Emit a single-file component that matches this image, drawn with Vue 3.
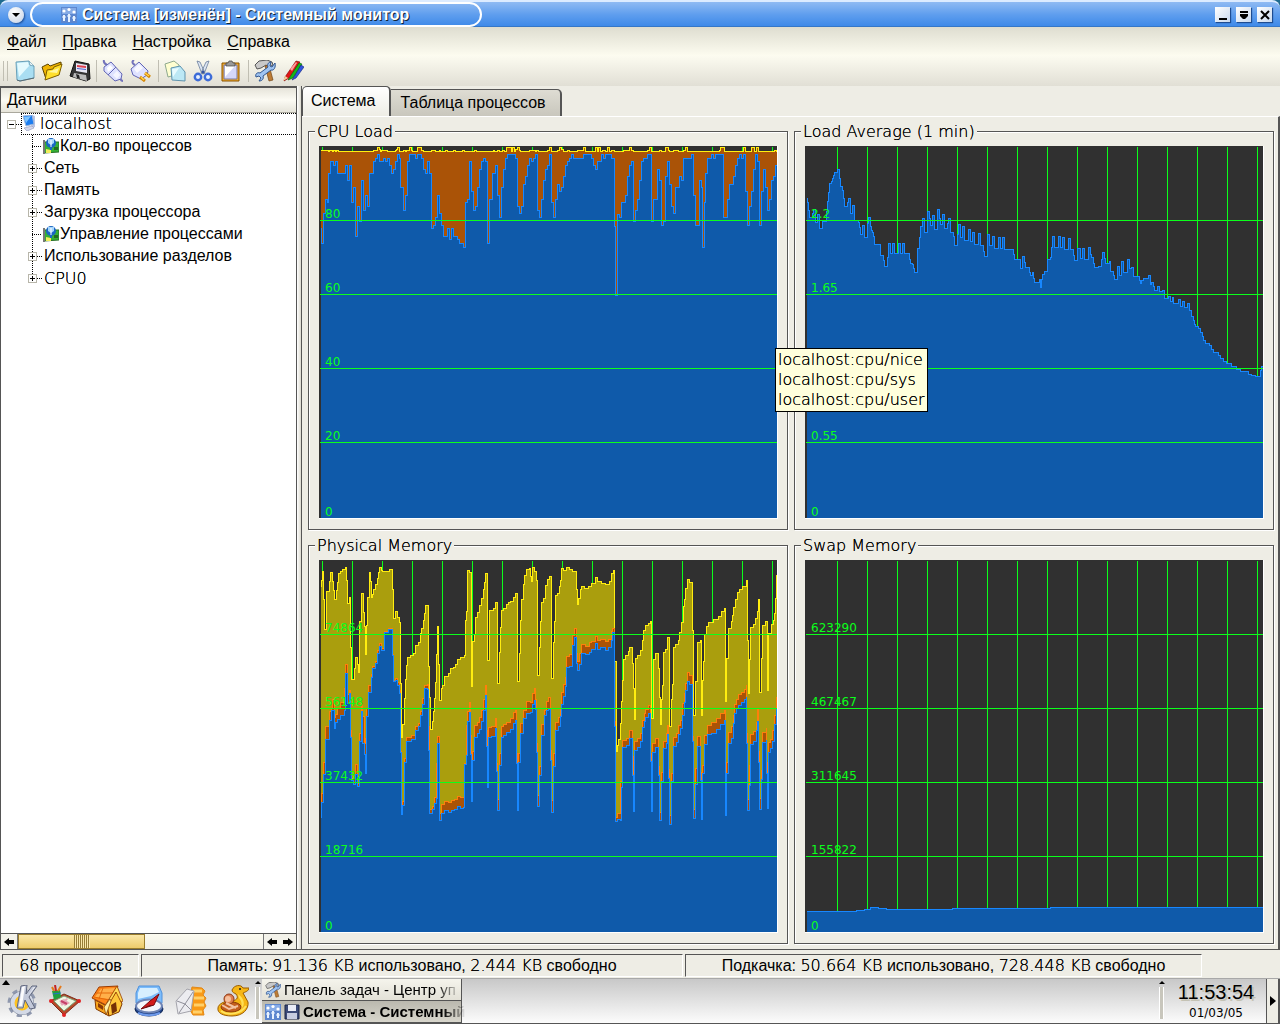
<script setup>
import { ref } from "vue";

const activeTab = ref("Система");
const tabs = ["Система", "Таблица процессов"];

const menus = ["Файл", "Правка", "Настройка", "Справка"];

// icon artwork, 22x22
const art = {
	fresh: `<path d="M3 2l13-1 1 4 4 1v12l-14 3-3-1z" fill="#a9def2" stroke="#6aa0b8"/><path d="M4 3l11-1 1 4-10 11z" fill="#e4fafe"/><path d="M16 1l1 4 4 1z" fill="#fff" stroke="#6aa0b8" stroke-width=".7"/><path d="M4 20l3 1 14-3" fill="none" stroke="#5a6a72"/>`,
	open: `<path d="M1 7l6-3 2 2 11-4v4L5 19z" fill="#f0b400" stroke="#5b4300"/><path d="M6 10l6-1 1-2 8-3-3 11-14 5z" fill="#ffdf2c" stroke="#7c5c00"/><path d="M7 12l11-4-2 5z" fill="#fff6a0"/>`,
	save: `<path d="M6 1l14 3 1 15-4 2-16-5z" fill="#333" stroke="#111"/><path d="M7 3l11 2v8L7 11z" fill="#e8e8f4"/><path d="M8 5l9 1v2l-9-1z" fill="#e04050"/><path d="M8 8l9 1v1l-9-1z" fill="#4a60d0"/><path d="M5 13l12 2 1 6-14-4z" fill="#bbb"/><path d="M7 14l3 1 1 4-3-1z" fill="#222"/>`,
	connect: `<path d="M2 0c-1 3 1 4 3 5M17 18c2 0 1 3 4 3" fill="none" stroke="#7474bb" stroke-width="2"/><path d="M2 7l7-5 11 12-1 5-6 2L2 11z" fill="#dfe2ff" stroke="#6266b5"/><path d="M6 15l8-8" stroke="#6266b5"/><path d="M5 8l3-3 3 3-5 4z" fill="#fff"/><path d="M11 15l4-4 3 4-3 4z" fill="#f5f5ff"/>`,
	disconnect: `<path d="M4 0c-3 2-1 4 1 5" fill="none" stroke="#7474bb" stroke-width="2"/><path d="M1 9l8-7 9 9-1 4-6 4-8-4z" fill="#dfe2ff" stroke="#6266b5"/><path d="M4 9l5-5 4 4-6 5z" fill="#f8f8ff"/><path d="M15 13l5 4M10 17l5 4" stroke="#d58400" stroke-width="3"/><path d="M15 13l4 3M11 17l3 3" stroke="#ffd24a" stroke-width="1.500"/>`,
	copy: `<path d="M1 4l9-3 5 4v9L4 17z" fill="#fffed0" stroke="#8ea98e"/><path d="M7 8l9-2 5 6v9l-13-1z" fill="#bce8f5" stroke="#5f93ad"/><path d="M8 9l7-1-6 9z" fill="#e8fbff"/>`,
	cut: `<path d="M5 1l3 1 5 11-3 1zM17 1l-3 1-5 11 3 1z" fill="#dce5f2" stroke="#697d9c" stroke-width=".8"/><circle cx="6" cy="17" r="3.2" fill="#e7f0ff" stroke="#3d6cd8" stroke-width="2.4"/><circle cx="16" cy="17" r="3.2" fill="#e7f0ff" stroke="#3d6cd8" stroke-width="2.4"/><circle cx="11" cy="12" r="1.4" fill="#3353a3"/>`,
	paste: `<path d="M2 3h17v18H2z" fill="#f0ac2d" stroke="#8a5200"/><path d="M4 5h13v14H4z" fill="#d5d7f8" stroke="#7777a0"/><path d="M5 6h10L5 17z" fill="#fff"/><path d="M6 3h2l1-2h3l1 2h2v3H6z" fill="#999" stroke="#444" stroke-width=".7"/>`,
	tools: `<path d="M1 5l4-4 8-1 5 2 1 3-4 2-3-2-5 3-4 1z" fill="#c9c9c9" stroke="#555"/><path d="M11 6l4-1 4 15-4 1z" fill="#bd7c35" stroke="#744515" stroke-width=".7"/><path d="M21 3l-3 4-2-1 1-4c-3 0-4 3-3 5l-8 6c-3-1-5 1-4 4l3-1 2 2-2 3c3 0 5-2 4-5l8-6c3 1 5-3 4-7z" fill="#9fc4f2" stroke="#31568f"/>`,
	pens: `<path d="M3 17L14 1l4 1L7 18l-5 3z" fill="#e01515" stroke="#700" stroke-width=".6"/><path d="M8 17l9-14 3 1-9 14-5 2z" fill="#18b718" stroke="#075b07" stroke-width=".6"/><path d="M12 17l7-12 3 2-8 11-4 2z" fill="#3055e0" stroke="#112079" stroke-width=".6"/><path d="M1 21l2-5 3 2z" fill="#f1cfa0"/><path d="M8 9l6-7 1 1-5 8z" fill="#ff9c9c"/>`,
	monitor: `<path d="M0 0h16v16H0z" fill="#5d87cf"/><path d="M1 1h14v6H1z" fill="#86abe6"/><path d="M3 8v6M8 7v8M13 9v5" stroke="#e8f2ff" stroke-width="2"/><path d="M1 10h4M6 9h4M11 11h4" stroke="#e8f2ff"/><circle cx="3" cy="4" r="1.600" fill="#fff"/><circle cx="8" cy="2.500" r="1.600" fill="#fff"/><circle cx="13" cy="5" r="1.600" fill="#fff"/>`,
	host: `<path d="M10 0l3 1v11l-4 1z" fill="#b9c4e2"/><path d="M1 1l9-1 2 9-8 2z" fill="#1c7df0" stroke="#9fb7dd"/><path d="M2 2l7-1-5 7z" fill="#7cc4ff"/><path d="M2 13l8-2 2 2-7 3z" fill="#d4d8ec" stroke="#8f97bb" stroke-width=".6"/>`,
	sensor: `<path d="M1 4h15v10L1 15z" fill="#35b035" stroke="#287028"/><path d="M3 11l5 1v3H3z" fill="#f1ec5b"/><path d="M11 9h4v3h-4z" fill="#216b21"/><path d="M0 2h2v14H0z" fill="#777"/><circle cx="8" cy="5" r="5" fill="#1a66c4"/><path d="M7 8h2v4H7z" fill="#1a66c4"/><path d="M5 1h6v4L8 7 5 5z" fill="#a5d6fb"/><path d="M8 2v7" stroke="#fff"/>`,
};

const toolbar = [
	[
		{ name: "Новый", art: art.fresh },
		{ name: "Открыть", art: art.open },
		{ name: "Сохранить", art: art.save },
	],
	[
		{ name: "Подключить", art: art.connect },
		{ name: "Отключить", art: art.disconnect },
	],
	[
		{ name: "Копировать", art: art.copy },
		{ name: "Вырезать", art: art.cut },
		{ name: "Вставить", art: art.paste },
	],
	[
		{ name: "Параметры", art: art.tools },
		{ name: "Стиль", art: art.pens },
	],
];

const sensors = [
	{ label: "Кол-во процессов", leaf: true },
	{ label: "Сеть" },
	{ label: "Память" },
	{ label: "Загрузка процессора" },
	{ label: "Управление процессами", leaf: true },
	{ label: "Использование разделов" },
	{ label: "CPU0", latin: true },
];

// launcher icons, 32x32
const launchers = [
	{
		name: "Меню K",
		art: `<circle cx="15" cy="18" r="12.500" fill="none" stroke="#8e97ad" stroke-width="4" stroke-dasharray="5 4.800"/><circle cx="15" cy="18" r="9.500" fill="none" stroke="#737c92" stroke-width="5"/><circle cx="15" cy="18" r="9.500" fill="#ffc31f" stroke="#d3d9e6" stroke-width="4"/><circle cx="14" cy="20" r="4" fill="#ffe477"/><path d="M14 1l6-1-1 9 6-8 5 0-8 11 6 11-5 1-5-9-2 8-6 0z" fill="#c3c9da" stroke="#5f667d"/><path d="M15 2l3-1-3 20-3 0zM21 11l6-9 1 0-7 9z" fill="#fbfbfd"/>`,
	},
	{
		name: "Рабочий стол",
		art: `<path d="M1 16L15 9l16 7-16 14z" fill="#b54a2a" stroke="#7d2d18"/><path d="M5 16l10-5 12 5-12 10z" fill="#eef7e2" stroke="#7aa079"/><path d="M10 16l5-2 6 4-5 3zM11 18l7-5 1 1-6 7z" fill="#e6a9b9"/><path d="M12 16l6 3" stroke="#c54368" stroke-width="2"/><path d="M3 6l8-1 1 7-7 3z" fill="#1fa13e"/><path d="M5 6L3 2M9 6l3-5" stroke="#e57b1c" stroke-width="2"/><path d="M7 6l-1-6" stroke="#c32222" stroke-width="2"/><path d="M4 9l8-1" stroke="#2a6fd0"/><circle cx="2" cy="16" r="2" fill="#e02222"/><circle cx="30" cy="16" r="2" fill="#e02222"/><circle cx="15" cy="30" r="2" fill="#e02222"/>`,
	},
	{
		name: "Домой",
		art: `<path d="M4 15l12 6 2 10-13-7z" fill="#f9a41a" stroke="#813800"/><path d="M16 20L26 6l5 13-3 8-10 4z" fill="#ffc739" stroke="#813800"/><path d="M1 13L8 2l19-1-10 20z" fill="#ff8418" stroke="#9b3b00"/><path d="M4 12l6-8 14-1-6 11z" fill="#ffb04a"/><path d="M5 8h17M3 12l15 3M12 3L8 14" stroke="#e36b0c" fill="none"/><path d="M26 1l6 15-2 1-5-10-8 14-2-2z" fill="#ffdb55" stroke="#9b3b00" stroke-width=".8"/><path d="M20 20l5-3 1 9-5 3z" fill="#743006"/><path d="M13 22l6-8 1 2-5 14z" fill="#fff0a8" stroke="#813800" stroke-width=".7"/><path d="M7 18l5 3v4l-5-3z" fill="#8b3906"/>`,
	},
	{
		name: "Konqueror",
		art: `<path d="M6 1h20l3 7v10l-5 4H8l-5-4V8z" fill="#7cbcfb" stroke="#4e91dc"/><path d="M7 3h17l2 4-8 4-13 3V8z" fill="#d7efff"/><ellipse cx="16" cy="24" rx="14" ry="7" fill="#1b3f86" stroke="#102552"/><ellipse cx="16" cy="21" rx="13" ry="6.500" fill="#f3f6fb" stroke="#6e84b5" stroke-width="2"/><path d="M8 24l9-8 9-7-5 11z" fill="#d21a1a" stroke="#78090d"/><path d="M8 24l9-4 4 0z" fill="#6a1116"/><path d="M5 28c6 3 16 3 22 0" fill="none" stroke="#6e9aea" stroke-width="2"/>`,
	},
	{
		name: "Kontact",
		art: `<path d="M17 2l10 1 3 3-2 4 3 3-2 4 2 4-3 4 1 5H18l-5-8z" fill="#f99a17" stroke="#e08818"/><path d="M18 6h9M19 13h10M19 20h10M18 27h9" stroke="#ffd06a" stroke-width="3"/><path d="M1 16L12 4l7 2-3 20-13 3z" fill="#ececf0" stroke="#a4a4ac"/><path d="M2 16l8 3 8-12M10 19L4 28M10 19l6 6" fill="none" stroke="#8f8f99"/>`,
	},
	{
		name: "Kopete",
		art: `<path d="M15 5c2-5 9-6 11-2l6 0c0 3-4 4-6 5l5 9c1 7-5 14-16 14C6 31 0 28 1 23c0-4 7-7 11-7 8 0 10-3 7-7-1-1-4-1-4-4z" fill="#f6b615" stroke="#9a5b00"/><path d="M21 9c6 4 8 11 3 15 1-4 1-8-2-11z" fill="#ffde55"/><ellipse cx="14" cy="22" rx="10" ry="5" fill="#c35d1f" stroke="#8d3a05"/><circle cx="12" cy="14" r="5" fill="#dd7f4f" stroke="#8f3815"/><circle cx="11" cy="14" r="3" fill="#f7c09d"/><path d="M5 20l7 4 9-3M9 18l10 5" fill="none" stroke="#f3c4a5" stroke-width="2"/><circle cx="23" cy="4" r="1" fill="#222"/><path d="M4 26c7 5 20 3 25-5" fill="none" stroke="#ffe25e" stroke-width="2"/>`,
	},
];

// Sample traces: "x,y" or "x,y1,y2" groups, three units to one chart pixel.
const cpuTotal =
	"60,199 84,202 87,199 96,202 99,199 105,202 108,199 114,202 219,199 231,191 237,196 241,202 244,199 262,202 285,199 288,196 291,191 297,202 309,199 315,202 318,199 327,191 333,199 336,202 351,191 363,199 369,202 393,199 405,202 417,199 420,202 435,199 441,202 459,199 465,202 486,199 492,202 522,199 528,202 579,199 582,202 591,199 597,202 606,199 612,202 618,191 633,202 636,191 642,202 645,196 651,191 657,199 660,202 687,199 705,202 708,199 714,202 741,199 747,191 753,202 771,199 777,191 783,196 789,202 801,199 807,202 831,199 849,191 855,202 885,191 891,202 894,191 900,202 906,199 915,202 921,191 927,202 933,199 942,202 969,199 987,191 993,199 999,202 1041,199 1047,191 1053,202 1077,199 1083,202 1095,191 1104,199 1107,202 1119,199 1134,202 1149,199 1155,191 1161,202 1257,199 1260,191 1272,202 1329,191 1335,202 1353,191 1362,202 1368,191 1374,202 1422,199 1428,202";
const cpuUser =
	"60,432 64,478 69,387 75,347 81,355 86,268 92,233 99,244 105,233 111,268 135,244 141,290 147,244 153,355 159,310 165,458 171,367 177,411 183,290 189,380 195,335 201,367 207,268 219,233 225,222 231,211 237,233 249,222 255,233 261,222 267,244 273,268 279,256 285,233 291,211 297,222 300,310 309,380 315,335 321,233 327,211 345,222 351,211 363,222 369,256 375,268 381,233 387,268 393,432 399,424 405,400 411,335 417,387 423,424 429,458 441,432 447,467 453,432 459,458 471,467 477,478 489,490 495,355 501,347 507,233 513,322 519,380 525,367 531,310 537,256 543,233 549,222 555,233 561,478 567,347 576,268 585,244 591,335 597,400 603,310 609,256 615,222 621,211 645,222 651,367 657,387 663,367 669,302 675,277 681,244 687,222 693,233 699,222 705,211 711,380 717,400 723,347 729,290 735,256 741,244 747,211 753,355 759,400 765,347 771,302 777,322 783,310 789,277 795,244 801,233 807,222 813,211 819,222 849,211 873,222 879,244 885,256 891,233 903,211 909,222 915,211 933,222 942,428 945,635 951,390 957,400 963,355 975,335 981,277 987,244 993,233 999,411 1005,380 1011,347 1017,290 1023,233 1029,222 1041,211 1053,411 1059,347 1071,256 1077,290 1083,424 1089,411 1095,277 1101,233 1107,302 1113,367 1119,387 1125,310 1137,277 1143,290 1149,222 1173,211 1179,335 1185,424 1197,290 1203,310 1207,490 1212,355 1217,268 1223,222 1235,211 1241,222 1247,211 1271,400 1283,347 1289,302 1301,277 1307,244 1313,222 1319,211 1325,222 1331,211 1337,322 1343,424 1349,367 1355,322 1361,256 1367,211 1373,233 1379,424 1385,322 1391,256 1397,310 1403,380 1409,347 1415,290 1421,277 1427,244";
const loadAverage =
	"48,235 51,247 54,270 58,292 66,280 69,268 75,306 81,283 87,325 97,304 108,274 111,244 115,217 118,190 124,183 127,175 130,166 133,157 142,148 148,175 151,199 156,211 160,235 163,259 172,247 175,235 180,280 186,256 192,300 205,306 208,322 211,343 217,316 223,352 232,310 234,292 240,319 243,331 247,337 250,349 253,373 270,390 272,406 280,421 283,439 292,411 295,370 301,400 307,370 313,400 325,370 331,400 337,370 343,400 358,418 361,430 367,433 370,444 373,457 382,385 388,352 391,319 397,295 402,319 403,337 412,274 419,295 421,316 427,286 433,328 443,268 449,295 452,312 457,283 463,325 473,310 475,295 480,319 481,337 490,349 493,376 502,343 505,313 510,337 512,351 517,319 523,361 535,328 541,363 547,337 553,373 565,340 571,376 580,394 583,409 592,343 598,376 607,349 613,385 625,352 631,385 637,352 643,388 670,403 673,418 690,445 696,409 702,427 705,441 718,457 722,466 727,457 731,475 734,487 747,479 750,502 755,478 757,463 763,454 772,418 781,412 784,382 787,349 793,382 805,349 811,382 817,352 823,388 835,355 841,388 850,405 853,421 862,385 870,415 877,385 883,418 894,382 900,403 903,412 911,430 914,442 925,439 934,418 937,397 943,415 946,430 958,424 962,454 970,466 973,478 982,439 989,466 995,424 1001,457 1013,418 1019,445 1025,442 1031,468 1048,480 1051,490 1055,481 1060,475 1075,466 1081,493 1085,487 1091,500 1093,511 1103,499 1109,514 1117,511 1122,535 1134,529 1140,544 1147,532 1151,550 1164,538 1170,559 1177,544 1184,562 1192,550 1198,571 1203,588 1209,600 1214,612 1217,619 1226,625 1231,636 1236,650 1241,660 1247,670 1258,676 1264,688 1270,698 1285,706 1292,716 1300,725 1310,731 1324,740 1338,748 1352,755 1376,762 1385,767 1397,769 1410,752 1413,740";
const memoryTotal =
	"60,169 65,150 67,124 70,208 73,298 78,184 89,154 91,127 97,154 101,181 104,208 108,181 111,157 115,130 121,124 127,119 136,112 140,151 142,220 148,202 152,352 153,448 163,415 166,382 171,403 174,427 177,370 179,275 184,190 189,246 192,289 195,343 197,373 200,286 202,202 207,127 212,154 215,202 218,193 220,178 226,163 231,145 235,127 238,113 243,122 248,124 268,118 278,178 280,265 286,244 292,262 297,277 300,289 302,460 304,622 308,583 313,505 316,448 319,406 322,382 332,376 340,370 346,346 355,338 362,310 364,295 370,271 374,250 376,226 386,408 387,502 390,598 396,574 399,544 403,505 406,457 409,373 411,289 416,404 418,511 424,475 427,466 434,438 445,430 452,415 460,412 466,403 472,388 481,381 492,376 495,272 498,244 501,121 508,127 513,300 514,469 518,335 522,313 525,262 531,247 537,226 543,205 550,178 553,157 556,130 561,250 563,391 567,241 580,235 586,217 591,320 593,460 597,368 600,292 603,240 610,235 618,223 624,217 631,214 639,202 645,190 651,328 652,454 657,370 661,270 664,209 669,163 673,136 680,119 688,115 690,139 693,154 698,112 704,124 709,152 711,355 713,436 718,352 721,274 723,217 730,205 736,166 741,148 748,139 753,250 754,445 759,337 763,274 765,196 771,190 777,169 782,151 784,115 790,121 799,112 807,118 817,124 829,178 831,222 836,205 841,178 844,170 853,175 865,170 874,160 886,142 892,154 904,160 916,163 928,154 933,130 940,121 944,394 948,664 951,646 955,628 960,580 963,514 966,451 969,388 976,376 985,364 988,352 997,400 999,475 1002,569 1005,385 1011,376 1020,361 1026,331 1029,301 1035,286 1044,280 1050,274 1053,430 1055,565 1059,388 1065,370 1075,415 1077,502 1080,583 1083,508 1086,466 1089,367 1096,358 1102,322 1107,469 1109,589 1113,508 1116,463 1119,352 1125,343 1134,331 1137,307 1143,277 1149,229 1152,208 1156,175 1161,149 1167,157 1178,300 1180,556 1185,454 1191,337 1200,331 1203,470 1204,556 1207,450 1209,394 1212,312 1220,289 1225,277 1240,268 1254,260 1263,244 1272,235 1275,300 1276,514 1279,385 1284,295 1294,274 1297,256 1300,232 1306,208 1311,187 1317,178 1326,169 1338,152 1341,330 1344,490 1347,388 1350,292 1360,283 1366,265 1372,244 1375,208 1377,370 1379,487 1383,385 1386,286 1395,274 1401,380 1403,481 1406,310 1413,283 1419,271 1423,250 1426,205 1429,136";
const memoryParts =
	"60,830,862 65,790,817 69,698,733 77,590,627 88,544,571 93,535,541 98,508,541 102,562,595 107,553,577 113,535,568 120,517,556 132,475,541 136,403,430 141,494,520 148,481,490 152,600,622 154,745,750 160,745,763 166,704,733 171,760,769 177,610,634 183,520,545 188,560,640 192,640,673 196,626,730 200,535,559 206,466,487 213,433,442 218,409,415 226,393,400 232,361,370 237,340,349 243,355,360 254,305,307 266,295,297 276,372,375 280,452,455 286,445,450 291,457,466 297,480,490 301,665,668 304,850,853 308,815,826 314,685,697 320,622,634 335,617,627 345,590,601 355,580,589 361,545,556 367,505,523 374,466,475 383,463,478 385,590,661 387,838,850 397,829,838 403,802,820 409,700,805 411,619,640 417,850,871 423,824,850 434,815,841 445,818,847 454,812,842 463,808,838 472,800,828 480,803,834 490,802,832 494,700,703 498,586,676 501,544,574 507,517,547 511,615,673 514,782,814 517,665,691 524,586,622 531,576,610 537,562,598 543,542,574 549,508,541 555,466,496 560,600,649 562,740,772 566,592,622 573,590,619 585,565,595 590,700,724 592,808,841 598,670,706 603,590,622 610,583,617 620,577,607 630,565,598 640,548,580 646,541,571 650,670,700 652,808,841 656,670,697 661,580,611 670,542,565 678,514,550 690,518,547 697,490,523 702,475,510 706,508,538 710,640,667 712,796,829 717,710,736 723,582,616 733,540,556 738,515,541 745,503,538 751,660,690 754,812,848 759,670,709 765,576,601 775,562,590 780,537,560 783,487,523 790,463,500 795,442,470 799,378,412 808,374,408 817,315,345 823,295,322 829,370,400 832,395,421 838,370,403 843,343,370 855,348,373 867,337,367 875,333,358 885,318,340 892,330,357 900,328,352 915,333,360 926,328,352 933,304,330 937,295,306 942,575,590 946,862,874 953,850,868 960,755,870 963,753,772 968,632,652 978,625,646 988,602,625 997,680,736 1000,820,845 1004,634,661 1011,625,652 1020,611,634 1026,571,592 1032,550,574 1036,538,562 1046,527,550 1051,670,694 1054,820,845 1058,640,667 1066,625,653 1075,710,735 1078,848,871 1083,728,754 1089,633,655 1098,611,640 1102,587,614 1106,718,745 1108,856,883 1115,730,754 1119,622,650 1128,610,637 1136,586,613 1140,571,595 1147,520,556 1152,490,517 1156,460,481 1162,428,454 1169,436,463 1177,620,635 1180,838,865 1185,715,763 1191,620,650 1201,726,752 1204,843,868 1207,706,730 1212,615,643 1222,586,613 1235,577,610 1249,566,597 1260,551,583 1272,541,571 1275,825,856 1278,698,730 1284,606,639 1293,590,625 1299,556,580 1304,523,550 1310,508,535 1315,494,526 1323,487,517 1332,478,508 1338,464,500 1340,610,640 1342,808,841 1347,706,766 1350,613,642 1359,604,634 1368,577,601 1373,538,574 1375,665,697 1378,806,838 1383,720,749 1386,607,637 1398,593,628 1400,698,729 1402,805,835 1404,637,667 1410,628,655 1417,602,635 1423,556,583 1428,502,534";
const swapUsed = "3,1053 153,1050 177,1047 195,1041 219,1044 243,1047 441,1044 735,1041";

const WIDTH = 458;
const HEIGHT = 372;

// turns a trace into a stepped path; column picks the y value of the group
const stepPath = (trace, left = 0, top = 0, column = 1) => {
	const points = trace.split(" ").map(group => {
		const values = group.split(",").map(Number);
		return [Math.floor((values[0] - left) / 3), Math.floor((values[column] - top) / 3)];
	});
	const steps = points.map(([x, y]) => `H${x + 0.5}V${y + 0.5}`).join("");
	return `M1.5 ${points[0][1] + 0.5}${steps}H${WIDTH}`;
};

const series = (name, color, line, fill) => ({ name, line, color, fill });

const blue = ["#1787ff", "#0f5aaa"];

const charts = [
	{
		title: "CPU Load",
		labels: ["80", "60", "40", "20", "0"],
		firstLine: 3,
		series: [
			series("total", "#fff010", stepPath(cpuTotal, 57, 186), "#aa5307"),
			series("user", blue[0], stepPath(cpuUser, 57, 186), blue[1]),
		],
	},
	{
		title: "Load Average (1 min)",
		labels: ["2.2", "1.65", "", "0.55", "0"],
		firstLine: 32,
		series: [series("load", blue[0], stepPath(loadAverage, 45, 78), blue[1])],
	},
	{
		title: "Physical Memory",
		labels: ["74864", "56148", "37432", "18716", "0"],
		firstLine: 3,
		series: [
			series("total", "#ffed10", stepPath(memoryTotal, 57, 90), "#aa9e0d"),
			series("cached", "#ff7f0b", stepPath(memoryParts, 57, 90), "#aa5307"),
			series("used", blue[0], stepPath(memoryParts, 57, 90, 2), blue[1]),
		],
	},
	{
		title: "Swap Memory",
		labels: ["623290", "467467", "311645", "155822", "0"],
		firstLine: 32,
		series: [series("swap", blue[0], stepPath(swapUsed), blue[1])],
	},
];

const verticals = first => {
	const result = [];
	for (let x = first; x < WIDTH; x += 30) result.push(x + 0.5);
	return result;
};
</script>

<template>
	<div class="desktop">
		<header class="titlebar">
			<button class="window-menu" aria-label="Меню окна">
				<svg viewBox="0 0 14 14"><path d="M3 5h8l-4 4z" /></svg>
			</button>
			<div class="caption">
				<svg class="icon-small" viewBox="0 0 16 16" v-html="art.monitor"></svg>
				<h1>Система [изменён] - Системный монитор</h1>
			</div>
			<div class="window-buttons">
				<button aria-label="Свернуть"><svg viewBox="0 0 14 14"><path d="M3 10h8v2H3z" /></svg></button>
				<button aria-label="Развернуть"><svg viewBox="0 0 14 14"><path d="M3 3h8v2H3zM3 6h8v2L8 11H6L3 8z" /></svg></button>
				<button aria-label="Закрыть"><svg viewBox="0 0 14 14"><path d="M3 3l8 8M11 3l-8 8" stroke="#000" stroke-width="2" /></svg></button>
			</div>
		</header>

		<nav class="menubar">
			<button v-for="menu in menus" :key="menu"><u>{{ menu[0] }}</u>{{ menu.slice(1) }}</button>
		</nav>

		<div class="toolbar">
			<span class="handle"></span>
			<div v-for="(group, i) in toolbar" :key="i" class="tool-group">
				<button v-for="tool in group" :key="tool.name" :aria-label="tool.name">
					<svg viewBox="0 0 22 22" v-html="tool.art"></svg>
				</button>
			</div>
		</div>

		<main class="workspace">
			<aside class="sensors">
				<div class="sensors-header">Датчики</div>
				<ul class="tree">
					<li class="tree-root">
						<button class="expander" aria-label="Свернуть узел">
							<svg viewBox="0 0 9 9"><path d="M1 3.500h5" /></svg>
						</button>
						<span class="stub"></span>
						<span class="root-label latin">
							<svg class="icon-small" viewBox="0 0 16 16" v-html="art.host"></svg>localhost
						</span>
					</li>
					<li v-for="sensor in sensors" :key="sensor.label" class="tree-item" :class="{ leaf: sensor.leaf }">
						<button v-if="!sensor.leaf" class="expander" aria-label="Развернуть узел">
							<svg viewBox="0 0 9 9"><path d="M1 3.500h5M3.500 1v5" /></svg>
						</button>
						<span class="branch"></span>
						<svg v-if="sensor.leaf" class="icon-small" viewBox="0 0 16 16" v-html="art.sensor"></svg>
						<span :class="{ latin: sensor.latin }">{{ sensor.label }}</span>
					</li>
				</ul>
				<div class="scrollbar">
					<button aria-label="Влево"><svg viewBox="0 0 12 12"><path d="M1 6l5-4v2h5v4H6v2z" /></svg></button>
					<div class="track"><div class="thumb"><span class="grip"></span></div></div>
					<button aria-label="Влево"><svg viewBox="0 0 12 12"><path d="M1 6l5-4v2h5v4H6v2z" /></svg></button>
					<button aria-label="Вправо"><svg viewBox="0 0 12 12"><path d="M11 6L6 2v2H1v4h5v2z" /></svg></button>
				</div>
			</aside>

			<div class="splitter"></div>

			<section class="content">
				<div class="tabs" role="tablist">
					<button
						v-for="tab in tabs"
						:key="tab"
						role="tab"
						:aria-selected="activeTab === tab"
						:class="{ active: activeTab === tab }"
						@click="activeTab = tab"
					>
						{{ tab }}
					</button>
				</div>
				<div class="worksheet">
					<fieldset v-for="chart in charts" :key="chart.title" class="chart">
						<legend class="latin">{{ chart.title }}</legend>
						<div class="plot">
							<svg :viewBox="`0 0 ${WIDTH} ${HEIGHT}`" preserveAspectRatio="none" shape-rendering="crispEdges">
								<line
									v-for="x in verticals(chart.firstLine)"
									:key="x"
									:x1="x"
									:x2="x"
									y1="1"
									:y2="HEIGHT"
									class="grid-line"
								/>
								<template v-for="item in chart.series" :key="item.name">
									<path :d="`${item.line}V${HEIGHT}H1.5Z`" :fill="item.fill" />
									<path :d="item.line" :stroke="item.color" fill="none" />
								</template>
								<line v-for="n in 4" :key="n" x1="1" :x2="WIDTH" :y1="n * 74 + 0.5" :y2="n * 74 + 0.5" class="grid-line" />
							</svg>
							<div class="scale">
								<span v-for="label in chart.labels" :key="label">{{ label }}</span>
							</div>
						</div>
					</fieldset>
					<div class="tooltip latin" role="tooltip">
						<div>localhost:cpu/nice</div>
						<div>localhost:cpu/sys</div>
						<div>localhost:cpu/user</div>
					</div>
				</div>
			</section>
		</main>

		<footer class="statusbar">
			<div><span class="latin">68</span> процессов</div>
			<div>Память: <span class="latin">91.136 KB</span> использовано, <span class="latin">2.444 KB</span> свободно</div>
			<div>Подкачка: <span class="latin">50.664 KB</span> использовано, <span class="latin">728.448 KB</span> свободно</div>
		</footer>

		<div class="panel">
			<div class="launchers">
				<span class="mark"></span>
				<button v-for="app in launchers" :key="app.name" :aria-label="app.name">
					<svg viewBox="0 0 32 32" v-html="app.art"></svg>
				</button>
			</div>
			<div class="applet-handle"></div>
			<div class="tasks">
				<button>
					<svg class="icon-small" viewBox="0 0 22 22" v-html="art.tools"></svg>
					<span>Панель задач - Центр уп</span>
				</button>
				<button class="current">
					<svg class="icon-small" viewBox="0 0 16 16" v-html="art.monitor"></svg>
					<svg class="icon-small" viewBox="0 0 16 16">
						<path d="M1 1h14v14H1z" fill="#3b4a78" stroke="#1b2444" />
						<path d="M4 1h8v6H4z" fill="#e9ecf6" />
						<path d="M3 9h10v6H3z" fill="#c6cce0" />
					</svg>
					<span>Система - Системный</span>
				</button>
			</div>
			<div class="panel-space"></div>
			<div class="applet-handle"></div>
			<div class="clock">
				<time class="digits">11:53:54</time>
				<time class="date">01/03/05</time>
			</div>
			<button class="hide-panel" aria-label="Скрыть панель">
				<svg viewBox="0 0 6 10"><path d="M0 0l6 5-6 5z" /></svg>
			</button>
		</div>
	</div>
</template>

<style>
body {
	margin: 0;
	background: #eeede5;
}
</style>

<style scoped>
.desktop {
	display: flex;
	flex-direction: column;
	min-height: 100vh;
	background: linear-gradient(#1f6b8f 10px, #eeede5 10px);
	color: #000;
	font-family: "Liberation Sans", Arial, sans-serif;
	font-size: 16px;
}

.desktop * {
	box-sizing: border-box;
}

button {
	display: flex;
	align-items: center;
	justify-content: center;
	padding: 0;
	border: 0;
	background: none;
	color: inherit;
	font: inherit;
}

svg {
	display: block;
	flex: none;
}

.latin {
	font-family: "DejaVu Sans", sans-serif;
	font-weight: 200;
	text-shadow: 0 0 #000;
}

.icon-small {
	width: 16px;
	height: 16px;
}

.titlebar {
	display: flex;
	align-items: center;
	height: 27px;
	padding: 0 8px;
	border-top: 2px solid #dcebff;
	border-radius: 8px 8px 0 0;
	background: linear-gradient(#8fbaf3, #5f9eee 50%, #3c88e8);
	box-shadow: inset 0 -1px #3577c8;
}

.window-menu {
	width: 16px;
	height: 16px;
	border-radius: 50%;
	background: radial-gradient(circle at 40% 30%, #fff, #c3d0e4);
	box-shadow: 1px 1px 2px #1d4c92;
}

.window-menu svg {
	width: 14px;
	height: 14px;
}

.caption {
	display: flex;
	align-items: center;
	gap: 5px;
	width: 452px;
	height: 25px;
	margin-left: 6px;
	padding-left: 29px;
	border: 2px solid #fff;
	border-radius: 13px;
}

.caption h1 {
	margin: 0;
	color: #fff;
	font-size: 16px;
	line-height: 18px;
	text-shadow: 1px 1px #123;
	white-space: nowrap;
}

.window-buttons {
	display: flex;
	gap: 6px;
	margin-left: auto;
}

.window-buttons button {
	width: 15px;
	height: 15px;
	background: linear-gradient(135deg, #fff, #c9d9ee);
	box-shadow: 1px 1px 1px #1d4c92;
}

.window-buttons svg {
	width: 14px;
	height: 14px;
}

.menubar {
	display: flex;
	gap: 16px;
	height: 29px;
	padding-left: 7px;
	background: linear-gradient(#deddd0, #fdfcf0);
}

.menubar u {
	text-underline-offset: 2px;
}

.toolbar {
	display: flex;
	align-items: center;
	height: 30px;
	padding-left: 3px;
	background: linear-gradient(#fcfbf0, #e1dfd5);
}

.handle {
	width: 5px;
	height: 20px;
	border: solid #c0beb2;
	border-width: 0 1px;
}

.tool-group {
	display: flex;
	gap: 6px;
	padding: 0 5px;
}

.tool-group + .tool-group {
	padding-right: 6px;
	border-left: 1px solid #c0beb2;
}

.tool-group svg {
	width: 22px;
	height: 22px;
}

.workspace {
	display: flex;
	flex: 1;
	padding-bottom: 2px;
}

.sensors {
	display: flex;
	flex-direction: column;
	width: 296px;
	border: solid #555;
	border-width: 2px 0 1px 1px;
	background: #fff;
}

.sensors-header {
	height: 25px;
	padding-left: 6px;
	border-bottom: 1px solid #aaa89d;
	background: linear-gradient(#e6e4da, #fcfbf4 50%, #e6e4da);
	line-height: 24px;
}

.tree {
	flex: 1;
	margin: 0;
	padding: 0;
	list-style: none;
}

.tree-root {
	display: flex;
	align-items: center;
	height: 22px;
	padding-left: 6px;
}

.tree-root .stub {
	width: 5px;
	border-top: 1px dotted #000;
}

.root-label {
	display: flex;
	flex: 1;
	align-items: center;
	gap: 2px;
	height: 22px;
	padding-bottom: 2px;
	border: 1px dotted #000;
	border-right: 0;
}

.expander {
	z-index: 1;
	width: 9px;
	height: 9px;
	border: 1px solid #b8b6aa;
	background: #fff;
}

.expander svg {
	width: 9px;
	height: 9px;
	margin: 0 -2px -2px 0;
	stroke: #000;
	shape-rendering: crispEdges;
}

.tree-item {
	display: flex;
	align-items: center;
	height: 22px;
	margin-left: 31px;
	background: repeating-linear-gradient(#000 0 1px, transparent 1px 2px) 0 0 / 1px 100% no-repeat;
}

.tree-item .expander {
	margin-left: -4px;
}

.tree-item .branch {
	width: 5px;
	margin-right: 2px;
	border-top: 1px dotted #000;
}

.tree-item.leaf .branch {
	width: 9px;
}

.tree-item.leaf .icon-small {
	margin-right: 1px;
}

.tree-item:last-child {
	background-size: 1px 50%;
}

.scrollbar {
	display: flex;
	height: 16px;
	border-top: 1px solid #555;
}

.scrollbar button {
	width: 16px;
	background: #f3f2ea;
}

.scrollbar svg {
	width: 12px;
	height: 12px;
}

.track {
	flex: 1;
	border: solid #777;
	border-width: 0 1px;
	background: linear-gradient(#fcfbf0, #f1efe6);
}

.thumb {
	display: flex;
	justify-content: center;
	width: 52%;
	height: 100%;
	border: 1px solid #9a7d2c;
	background: linear-gradient(#fbe8a9, #edcb6b);
}

.grip {
	width: 16px;
	background: repeating-linear-gradient(90deg, #977d36 0 1px, #fbe8a9 1px 2px);
}

.splitter {
	width: 6px;
	border: solid #555;
	border-width: 0 1px 1px;
	background: linear-gradient(90deg, #fff, #dcdacf);
}

.content {
	display: flex;
	flex: 1;
	flex-direction: column;
}

.tabs {
	display: flex;
	align-items: flex-end;
	height: 30px;
}

.tabs button {
	height: 27px;
	padding: 0 14px 1px 9px;
	border: solid #555;
	border-width: 1px 2px 0 0;
	border-radius: 0 5px 0 0;
	background: linear-gradient(#dedcd3, #c9c7bd);
}

.tabs .active {
	height: 30px;
	padding-left: 8px;
	border-left-width: 1px;
	border-radius: 5px 5px 0 0;
	background: linear-gradient(#fff, #eeede5);
}

.worksheet {
	position: relative;
	display: grid;
	flex: 1;
	grid-template-columns: 1fr 1fr;
	grid-template-rows: 1fr 1fr;
	gap: 6px;
	padding: 5px 4px 5px 6px;
	border: solid #555;
	border-width: 0 2px 1px 0;
	border-top: 1px solid #fff;
}

.chart {
	display: flex;
	min-width: 0;
	margin: 0;
	padding: 6px 9px 10px 10px;
	border: 1px solid #555;
	box-shadow: inset 1px 1px #fff, 1px 1px #fff;
}

.chart legend {
	height: 18px;
	margin-left: -4px;
	padding: 0 2px;
	background: #eeede5;
	line-height: 20px;
}

.plot {
	position: relative;
	flex: 1;
	min-height: 200px;
	border: solid #fff;
	border-width: 0 1px 1px 0;
	background: #303030;
}

.plot svg {
	position: absolute;
	width: 100%;
	height: 100%;
}

.grid-line {
	stroke: #0bff1b;
}

.scale {
	position: absolute;
	inset: 0;
	display: grid;
	grid-template-rows: 74fr 74fr 74fr 74fr 76fr;
	align-items: end;
	padding-left: 6px;
	color: #0bff1b;
	font-family: "DejaVu Sans", sans-serif;
	font-size: 12px;
	line-height: 11px;
}

.tooltip {
	position: absolute;
	top: 231px;
	left: 473px;
	padding: 1px 2px;
	border: 1px solid #000;
	background: #ffffdc;
	line-height: 20px;
}

.statusbar {
	display: grid;
	grid-template-columns: 137px 541fr 516fr 76px;
	gap: 2px;
	height: 26px;
	padding: 2px 0 1px 2px;
	text-align: center;
}

.statusbar div {
	overflow: hidden;
	border: 1px solid #555;
	border-right-color: #fff;
	border-bottom-color: #fff;
	line-height: 22px;
	white-space: nowrap;
}

.panel {
	display: flex;
	height: 46px;
	border-top: 1px solid #a8a8a8;
	border-bottom: 1px solid #555;
	background: linear-gradient(#c8c8c8, #fcfcfc);
}

.launchers {
	position: relative;
	display: flex;
	align-items: center;
	gap: 10px;
	padding: 0 4px 0 7px;
}

.launchers svg {
	width: 32px;
	height: 32px;
}

.mark {
	position: absolute;
	top: 1px;
	left: 2px;
	border: 4px solid transparent;
	border-top: 0;
	border-bottom: 5px solid #000;
}

.applet-handle {
	width: 5px;
	margin: 8px 2px 4px;
	border: solid #fff;
	border-width: 0 1px;
	background: #c8c6bc;
}

.applet-handle::before {
	display: block;
	width: 0;
	margin: -6px 0 0 -1px;
	border: 3px solid transparent;
	border-top: 0;
	border-bottom: 3px solid #000;
	content: "";
}

.tasks {
	display: grid;
	width: 200px;
	grid-template-rows: 1fr 1fr;
}

.tasks button {
	justify-content: flex-start;
	gap: 3px;
	min-width: 0;
	padding-left: 3px;
	border: solid #555;
	border-width: 0 1px 1px 0;
	background: linear-gradient(#f5f4ec, #e3e1d7);
	font-size: 15px;
	white-space: nowrap;
}

.tasks .current {
	background: linear-gradient(#bab8ae, #d8d6cc);
	font-weight: bold;
}

.tasks span {
	flex: 1;
	text-align: left;
	mask-image: linear-gradient(90deg, #000 86%, transparent);
}

.panel-space {
	flex: 1;
}

.clock {
	display: flex;
	flex-direction: column;
	align-items: center;
	justify-content: center;
	width: 100px;
}

.digits {
	font-size: 20px;
	line-height: 24px;
	text-shadow: 2px 2px #c4c2b4;
}

.date {
	font-family: "DejaVu Sans", sans-serif;
	font-size: 12px;
	line-height: 18px;
}

.hide-panel {
	width: 14px;
	border: solid #555;
	border-width: 0 2px 0 1px;
	background: #eeede5;
}

.hide-panel svg {
	width: 6px;
	height: 10px;
}
</style>
